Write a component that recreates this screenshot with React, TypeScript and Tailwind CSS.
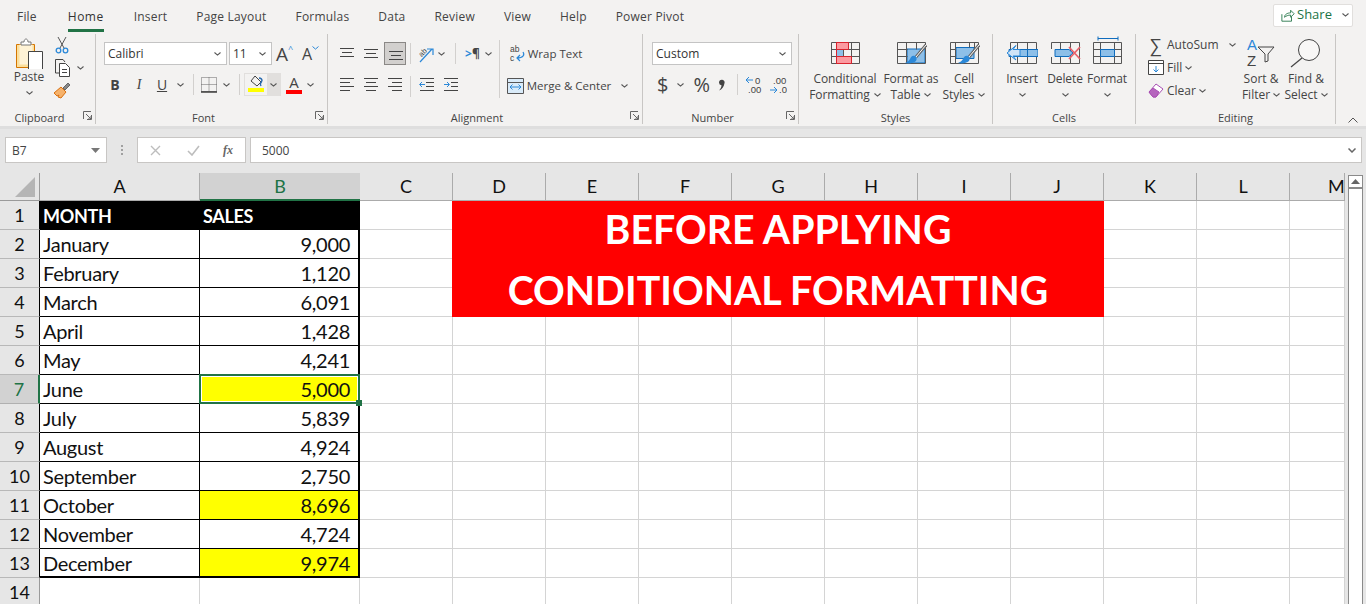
import type { ReactNode } from "react";

const tabs = ["File", "Home", "Insert", "Page Layout", "Formulas", "Data", "Review", "View", "Help", "Power Pivot"];
const columns = ["A", "B", "C", "D", "E", "F", "G", "H", "I", "J", "K", "L", "M"];
const sales: [string, string, boolean][] = [
  ["January", "9,000", false],
  ["February", "1,120", false],
  ["March", "6,091", false],
  ["April", "1,428", false],
  ["May", "4,241", false],
  ["June", "5,000", true],
  ["July", "5,839", false],
  ["August", "4,924", false],
  ["September", "2,750", false],
  ["October", "8,696", true],
  ["November", "4,724", false],
  ["December", "9,974", true],
];

function Chevron({ className = "" }: { className?: string }) {
  return (
    <svg width="7" height="4" viewBox="0 0 7 4" className={"shrink-0 " + className}>
      <path d="M.5.5l3 2.6 3-2.6" fill="none" stroke="#555" strokeWidth="1.1" />
    </svg>
  );
}

function Lines({ d }: { d: string }) {
  return (
    <svg width="15" height="15" viewBox="0 0 15 15" className="shrink-0">
      <path d={d} stroke="#444" strokeWidth="1" fill="none" />
    </svg>
  );
}

function Launcher() {
  return (
    <svg width="9" height="9" viewBox="0 0 9 9" className="absolute right-[3px] bottom-[4px]">
      <path d="M.5 8V.5H8M8.5 4v4.5H4M3 3l5 5M5 8h3V5" fill="none" stroke="#666" strokeWidth="1" />
    </svg>
  );
}

function Group({ className, label, launcher, children }: { className: string; label: string; launcher?: boolean; children: ReactNode }) {
  return (
    <div className={"relative h-[90px] shrink-0 border-r border-[#c8c6c4] flex flex-col " + className}>
      <div className="h-[76px]">{children}</div>
      <div className={"h-[14px] pt-[1px] leading-[14px] text-[11px] text-center text-[#444] " + (launcher ? "pr-[16px]" : "")}>{label}</div>
      {launcher && <Launcher />}
    </div>
  );
}

function GridIcon({ children }: { children?: ReactNode }) {
  return (
    <svg width="32" height="28" viewBox="0 0 32 28" className="shrink-0">
      {children}
    </svg>
  );
}

function ConditionalIcon() {
  return (
    <GridIcon>
      <path d="M7.5 6.5h12v7h-12zM7.5 20.5h15v7h-15z" fill="#fb9aa0" />
      <path d="M7.5 13.5h7v7h-7z" fill="#8dbfe8" />
      <path d="M2.5 6.5h28v21h-28zM2.5 13.5h28M2.5 20.5h28M14.5 13.5v7M22.5 6.5v21" fill="none" stroke="#555" />
      <path d="M7.5 6.5h12v7h-12zM7.5 20.5h15v7h-15zM7.5 6.5v21" fill="none" stroke="#d9232e" />
    </GridIcon>
  );
}

function Brush() {
  return (
    <>
      <path d="M31 9L21 21" stroke="#666" strokeWidth="3" />
      <path d="M31 9L21 21" stroke="#fff" strokeWidth="1" />
      <path d="M10 27c4 1 9 0 11-2 1-2 1-4-1-5-3-1-4 1-5 3-1 2-3 3-5 4z" fill="#2b88d8" />
    </>
  );
}

function TableIcon() {
  return (
    <GridIcon>
      <path d="M12 13h18v14H12z" fill="#8dbfe8" />
      <path d="M12 13h18v14H12z" fill="none" stroke="#0f6cbd" />
      <path d="M2.5 6.5h28v21h-28zM2.5 13.5h10M2.5 20.5h10M11.5 6.5v21M21.5 6.5v7" fill="none" stroke="#555" />
      <Brush />
    </GridIcon>
  );
}

function StylesIcon() {
  return (
    <GridIcon>
      <path d="M8 11.5h18v11H8z" fill="#8dbfe8" stroke="#0f6cbd" />
      <path d="M2.5 6.5h28v21h-28zM2.5 13.5h5M2.5 20.5h5M7.5 6.5v21M26.5 6.5v6M21.5 6.5v5" fill="none" stroke="#555" />
      <Brush />
    </GridIcon>
  );
}

function InsertIcon() {
  return (
    <GridIcon>
      <path d="M4.5 6.5h26v21h-26zM11.5 6.5v21M21.5 6.5v21" fill="none" stroke="#555" />
      <path d="M3 13.5h29v7H3z" fill="#8dbfe8" stroke="#0f6cbd" />
      <path d="M11.5 13.5v7M21.5 13.5v7" stroke="#0f6cbd" />
      <path d="M14 13.5H7l3-4-9 7.5 9 7-3-4h7z" fill="#cfe4f7" stroke="#2b88d8" />
    </GridIcon>
  );
}

function DeleteIcon() {
  return (
    <GridIcon>
      <path d="M2.5 6.5h28v21h-28zM11.5 6.5v21M21.5 6.5v21" fill="none" stroke="#555" />
      <path d="M0 13h14v8H0z" fill="#f3f2f1" />
      <path d="M6 13.5h14l4 3.5-4 3.5H6z" fill="#8dbfe8" stroke="#0f6cbd" />
      <path d="M20 11l11 12M31 11L20 23" stroke="#e8606a" strokeWidth="1.7" />
    </GridIcon>
  );
}

function FormatIcon() {
  return (
    <GridIcon>
      <path d="M7 2.5h20M7 .5v4M27 .5v4" stroke="#0f6cbd" />
      <path d="M2.5 6.5h28v21h-28zM2.5 13.5h28M2.5 20.5h28M9.5 6.5v21M23.5 6.5v21" fill="none" stroke="#555" />
      <path d="M9.5 13.5h14v7h-14z" fill="#8dbfe8" stroke="#0f6cbd" />
    </GridIcon>
  );
}

function LargeButton({ className, icon, lines, chevron }: { className: string; icon: ReactNode; lines: string[]; chevron?: boolean }) {
  return (
    <div className={"flex flex-col items-center shrink-0 " + className}>
      <div className="h-[35px] flex items-end justify-center pb-[7px]">{icon}</div>
      {lines.map((line, i) => (
        <div key={line} className="h-[16px] leading-[16px] flex items-center gap-[4px] whitespace-nowrap text-[12px] tracking-[-.1px] text-[#444]">
          {line}
          {chevron && i === lines.length - 1 && lines.length > 1 && <Chevron />}
        </div>
      ))}
      {lines.length === 1 && (
        <div className="h-[16px] flex items-center">
          <Chevron />
        </div>
      )}
    </div>
  );
}

function Combo({ className, text }: { className: string; text: string }) {
  return (
    <div className={"h-[23px] bg-white border border-[#c4c4c4] flex items-center justify-between pl-[3px] pr-[5px] text-[12px] text-[#333] shrink-0 " + className}>
      <span>{text}</span>
      <Chevron />
    </div>
  );
}

function Divider({ className = "" }: { className?: string }) {
  return <div className={"w-px h-[21px] bg-[#d2d0ce] shrink-0 " + className} />;
}

function Ribbon() {
  return (
    <div className="h-[94px] bg-[#f3f2f1] flex items-start pt-[2px]">
      {/* Clipboard */}
      <Group className="w-[96px]" label="Clipboard" launcher>
        <div className="flex">
          <div className="ml-[12px] w-[34px] flex flex-col items-center">
            <div className="h-[35px] flex items-end">
              <svg width="30" height="32" viewBox="0 0 30 32">
                <path d="M2.5 7.5h18v23h-18z" fill="#fbdf9c" stroke="#d47500" />
                <path d="M5.5 7.5h13v20h-13z" fill="#fff3d6" />
                <path d="M7 8V5h3c0-4 4-4 4 0h3v3z" fill="#fff" stroke="#777" />
                <path d="M14.500 14.500h14v18h-14z" fill="#fff" stroke="#444" />
              </svg>
            </div>
            <div className="h-[16px] leading-[16px] text-[12px] text-[#444]">Paste</div>
            <div className="h-[16px] flex items-center"><Chevron /></div>
          </div>
          <div className="ml-[8px] flex flex-col pt-[2px] gap-[5px]">
            <svg width="14" height="18" viewBox="0 0 14 18" className="ml-[1px]">
              <path d="M3 1l6 11M11 1L5 12" stroke="#555" fill="none" />
              <circle cx="3.500" cy="14.500" r="2.300" fill="none" stroke="#2b88d8" strokeWidth="1.300" />
              <circle cx="10.500" cy="14.500" r="2.300" fill="none" stroke="#2b88d8" strokeWidth="1.300" />
            </svg>
            <div className="flex items-center gap-[6px]">
              <svg width="17" height="18" viewBox="0 0 17 18">
                <path d="M5 14H1.500V.5H9L11 3" fill="none" stroke="#444" />
                <path d="M5.500 4.500h6l4 4v9h-10z" fill="#fff" stroke="#444" />
                <path d="M8 10.500h5M8 13.500h5" stroke="#444" />
              </svg>
              <Chevron />
            </div>
            <svg width="18" height="17" viewBox="0 0 18 17" className="-ml-[1px]">
              <path d="M10 6l5-5 2 2-5 5z" fill="#888" stroke="#666" />
              <path d="M1 11l7-6 5 5-5 6-3-1 1-2-2 1z" fill="#f6b26b" stroke="#d9700f" />
            </svg>
          </div>
        </div>
      </Group>

      {/* Font */}
      <Group className="w-[232px]" label="Font" launcher>
        <div className="flex flex-col pt-[8px] pl-[8px]">
          <div className="flex items-center">
            <Combo className="w-[123px]" text="Calibri" />
            <Combo className="w-[43px] ml-[2px]" text="11" />
            <div className="ml-[4px] w-[26px] flex items-start text-[19px] leading-[22px] text-[#444]">
              A<span className="text-[9px] leading-[12px] text-[#2b88d8]">^</span>
            </div>
            <div className="flex items-start text-[16px] leading-[22px] text-[#444]">
              A
              <svg width="7" height="4" viewBox="0 0 7 4" className="mt-[3px]">
                <path d="M.5.5l3 2.600 3-2.600" fill="none" stroke="#2b88d8" />
              </svg>
            </div>
          </div>
          <div className="flex items-center mt-[8px] h-[23px] text-[#444]">
            <div className="ml-[1px] w-[20px] text-center font-bold text-[14px]">B</div>
            <div className="ml-[4px] w-[20px] text-center italic text-[14px] font-['Liberation_Serif',serif]">I</div>
            <div className="ml-[3px] w-[20px] text-center underline text-[14px]">U</div>
            <Chevron className="ml-[5px]" />
            <Divider className="ml-[9px]" />
            <svg width="16" height="16" viewBox="0 0 16 16" className="ml-[7px]">
              <path d="M.5.500h15v14H.5zM8 .5v14M.5 7.500h15" fill="none" stroke="#666" strokeDasharray="1 1" />
              <path d="M0 15h16" stroke="#222" strokeWidth="1.300" />
            </svg>
            <Chevron className="ml-[6px]" />
            <Divider className="ml-[9px]" />
            <div className="ml-[4px] w-[37px] h-[23px] flex border border-[#e1dfdd]">
              <div className="w-[22px] flex flex-col items-center pt-[1px]">
                <svg width="16" height="13" viewBox="0 0 16 13">
                  <path d="M7 1l6 6-4 4-6-5z" fill="none" stroke="#444" />
                  <path d="M13 11c-1-2 0-4 1-5M11 3c2 0 3 1 3 3" fill="none" stroke="#2b6cb0" strokeWidth="1.400" />
                </svg>
                <div className="w-[16px] h-[4px] bg-[#ffff00]" />
              </div>
              <div className="flex-1 bg-[#e1dfdd] flex items-center justify-center"><Chevron /></div>
            </div>
            <div className="ml-[5px] w-[16px] flex flex-col items-center">
              <div className="text-[15px] leading-[15px]">A</div>
              <div className="w-[16px] h-[4px] bg-[#ff0000]" />
            </div>
            <Chevron className="ml-[5px]" />
          </div>
        </div>
      </Group>

      {/* Alignment */}
      <Group className="w-[315px]" label="Alignment" launcher>
        <div className="flex pl-[12px] pt-[8px]">
          <div className="flex flex-col">
            <div className="flex items-center h-[23px]">
              <Lines d="M0 2.500h14M2 6.500h10M0 10.500h14" />
              <div className="w-[9px]" />
              <Lines d="M0 3.500h14M2 7.500h10M0 11.500h14" />
              <div className="ml-[5px] w-[22px] h-[23px] bg-[#d2d0ce] border border-[#8a8886] flex items-center justify-center">
                <Lines d="M1 5.500h14M3 9.500h10M1 13.500h14" />
              </div>
              <Divider className="ml-[4px]" />
              <svg width="22" height="22" viewBox="-3 -3 22 22" className="ml-[4px] -mr-[3px]">
                <text x="1" y="9" fontSize="7.500" fill="#444" fontFamily="Liberation Sans" transform="rotate(-45 5 7)">ab</text>
                <path d="M2 16L14 3M9 3h6v6" fill="none" stroke="#2b88d8" strokeWidth="1.200" />
              </svg>
              <Chevron className="ml-[4px]" />
              <Divider className="ml-[10px]" />
              <div className="ml-[9px] flex items-center text-[12px] font-bold leading-none">
                <span className="text-[#2b88d8]">&gt;</span><span className="text-[#444]">¶</span>
              </div>
              <Chevron className="ml-[5px]" />
            </div>
            <div className="flex items-start h-[23px] mt-[9px] pt-[2px]">
              <Lines d="M0 2.500h14M0 6.500h10M0 10.500h14M0 14.500h10" />
              <div className="w-[9px]" />
              <Lines d="M0 2.500h14M2 6.500h10M0 10.500h14M2 14.500h10" />
              <div className="w-[9px]" />
              <Lines d="M0 2.500h14M4 6.500h10M0 10.500h14M4 14.500h10" />
              <Divider className="ml-[7px]" />
              <svg width="15" height="15" viewBox="0 0 15 15" className="ml-[8px]">
                <path d="M1 2.500h14M7 6.500h8M7 10.500h8M1 14.500h14" stroke="#444" />
                <path d="M6 8.500H1M3 6l-2.500 2.500L3 11" fill="none" stroke="#2b88d8" />
              </svg>
              <svg width="15" height="15" viewBox="0 0 15 15" className="ml-[9px]">
                <path d="M1 2.500h14M8 6.500h7M8 10.500h7M1 14.500h14" stroke="#444" />
                <path d="M1 8.500h5M4 6l2.500 2.500L4 11" fill="none" stroke="#2b88d8" />
              </svg>
            </div>
          </div>
          <div className="w-px h-[58px] bg-[#d2d0ce] ml-[7px] -mt-[2px] shrink-0" />
          <div className="flex flex-col ml-[7px] text-[11.5px] text-[#444]">
            <div className="flex items-center h-[23px]">
              <svg width="17" height="21" viewBox="0 0 17 21" className="ml-[2px]">
                <text x="1" y="9" fontSize="8.500" fill="#444" fontFamily="Liberation Sans">ab</text>
                <text x="1" y="18" fontSize="8.500" fill="#444" fontFamily="Liberation Sans">c</text>
                <path d="M14 9c2 3 0 6-6 6M11 12l-3 3 3 3" fill="none" stroke="#2b88d8" strokeWidth="1.200" />
              </svg>
              <span className="ml-[2px]">Wrap Text</span>
            </div>
            <div className="flex items-center h-[23px] mt-[9px]">
              <svg width="17" height="16" viewBox="0 0 17 16">
                <path d="M.5.5h16v15H.5z" fill="#d9ebf9" stroke="#555" />
                <path d="M.5 4.500h16" stroke="#555" />
                <path d="M3 9h11M5.500 6.500L3 9l2.500 2.500M11.500 6.500L14 9l-2.500 2.500" fill="none" stroke="#2b88d8" />
              </svg>
              <span className="ml-[3px]">Merge &amp; Center</span>
              <Chevron className="ml-[10px]" />
            </div>
          </div>
        </div>
      </Group>

      {/* Number */}
      <Group className="w-[156px]" label="Number" launcher>
        <div className="flex flex-col pl-[9px] pt-[8px]">
          <Combo className="w-[140px]" text="Custom" />
          <div className="flex items-center h-[23px] mt-[8px] text-[#444]">
            <span className="ml-[5px] text-[20px] leading-none">$</span>
            <Chevron className="ml-[9px]" />
            <span className="ml-[9px] text-[20px] leading-none">%</span>
            <svg width="7" height="12" viewBox="0 0 7 12" className="ml-[8px]">
              <path d="M1 3.500a2.800 2.800 0 1 1 5.400 1c-.4 3-2.400 6-5.400 7 1.600-1.600 2.400-3 2.500-5.200A2.800 2.800 0 0 1 1 3.500z" fill="#444" />
            </svg>
            <Divider className="ml-[12px]" />
            <svg width="18" height="22" viewBox="0 0 18 22" className="ml-[7px]">
              <path d="M8 6H1M4 3L1 6l3 3" fill="none" stroke="#2b88d8" />
              <text x="10" y="10" fontSize="9.500" fill="#444" fontFamily="Liberation Sans">0</text>
              <text x="3" y="19" fontSize="9.500" fill="#444" fontFamily="Liberation Sans">.00</text>
            </svg>
            <svg width="18" height="22" viewBox="0 0 18 22" className="ml-[6px]">
              <text x="4" y="10" fontSize="9.500" fill="#444" fontFamily="Liberation Sans">.00</text>
              <path d="M1 16h7M5 13l3 3-3 3" fill="none" stroke="#2b88d8" />
              <text x="10" y="19" fontSize="9.500" fill="#444" fontFamily="Liberation Sans">.0</text>
            </svg>
          </div>
        </div>
      </Group>

      {/* Styles */}
      <Group className="w-[194px]" label="Styles">
        <div className="flex pt-[2px] pl-[15px]">
          <LargeButton className="w-[62px]" icon={<ConditionalIcon />} lines={["Conditional", "Formatting"]} chevron />
          <LargeButton className="w-[54px] ml-[8px]" icon={<TableIcon />} lines={["Format as", "Table"]} chevron />
          <LargeButton className="w-[44px] ml-[4px]" icon={<StylesIcon />} lines={["Cell", "Styles"]} chevron />
        </div>
      </Group>

      {/* Cells */}
      <Group className="w-[143px]" label="Cells">
        <div className="flex pt-[2px] pl-[8px]">
          <LargeButton className="w-[42px]" icon={<InsertIcon />} lines={["Insert"]} />
          <LargeButton className="w-[42px] ml-[1px]" icon={<DeleteIcon />} lines={["Delete"]} />
          <LargeButton className="w-[42px]" icon={<FormatIcon />} lines={["Format"]} />
        </div>
      </Group>

      {/* Editing */}
      <Group className="w-[200px]" label="Editing">
        <div className="flex pl-[12px] text-[12px] text-[#444]">
          <div className="flex flex-col w-[90px]">
            <div className="flex items-center h-[22px]">
              <span className="ml-[2px] w-[17px] text-[18px] leading-none">∑</span>
              <span>AutoSum</span>
              <Chevron className="ml-[10px]" />
            </div>
            <div className="flex items-center h-[23px]">
              <svg width="16" height="16" viewBox="0 0 16 16">
                <path d="M.5.500h15v14H.5z" fill="#fff" stroke="#444" />
                <path d="M.5 3.500h15" stroke="#444" />
                <path d="M8 6v6M5.500 9.500L8 12l2.500-2.500" fill="none" stroke="#2b88d8" />
              </svg>
              <span className="ml-[3px]">Fill</span>
              <Chevron className="ml-[3px]" />
            </div>
            <div className="flex items-center h-[23px]">
              <svg width="16" height="15" viewBox="0 0 16 15">
                <path d="M1 9l7-8 7 5-7 8H5z" fill="#fff" stroke="#a94fb3" />
                <path d="M1 9l4-4 6 4-3 5H5z" fill="#b565bd" stroke="#a94fb3" />
              </svg>
              <span className="ml-[3px]">Clear</span>
              <Chevron className="ml-[3px]" />
            </div>
          </div>
          <div className="w-[46px] pt-[2px] flex flex-col items-center">
            <div className="h-[35px] flex items-end pb-[1px]">
              <svg width="30" height="34" viewBox="0 0 30 34">
                <text x="1" y="14" fontSize="15" fill="#2b88d8" fontFamily="Liberation Sans">A</text>
                <text x="1" y="30" fontSize="15" fill="#444" fontFamily="Liberation Sans">Z</text>
                <path d="M12 11h16l-6 7v7l-3 1v-8z" fill="none" stroke="#444" />
              </svg>
            </div>
            <div className="h-[16px] leading-[16px] whitespace-nowrap">Sort &amp;</div>
            <div className="h-[16px] leading-[16px] flex items-center gap-[3px] whitespace-nowrap">Filter<Chevron /></div>
          </div>
          <div className="w-[44px] pt-[2px] flex flex-col items-center">
            <div className="h-[35px] flex items-end pb-[3px]">
              <svg width="32" height="30" viewBox="0 0 32 30">
                <circle cx="19" cy="12" r="10.500" fill="#fff" fillOpacity=".4" stroke="#444" />
                <path d="M12 20L1 29" stroke="#444" strokeWidth="1.200" />
              </svg>
            </div>
            <div className="h-[16px] leading-[16px] whitespace-nowrap">Find &amp;</div>
            <div className="h-[16px] leading-[16px] flex items-center gap-[3px] whitespace-nowrap">Select<Chevron /></div>
          </div>
        </div>
      </Group>
      <svg width="10" height="6" viewBox="0 0 10 6" className="ml-[12px] mt-[83px]">
        <path d="M.5 5.500l4.500-4.500 4.500 4.500" fill="none" stroke="#555" />
      </svg>
    </div>
  );
}

function FormulaBar() {
  return (
    <div className="h-[47px] bg-[#e6e6e6] border-t-[3px] border-[#dedede] flex items-start pt-[8px] pl-[5px] text-[12px] text-[#444]">
      <div className="w-[102px] h-[26px] bg-white border border-[#c8c6c4] flex items-center justify-between pl-[6px] pr-[6px] pt-[1px]">
        B7
        <svg width="9" height="5" viewBox="0 0 9 5"><path d="M0 0h9L4.500 5z" fill="#777" /></svg>
      </div>
      <div className="w-[30px] flex flex-col items-center justify-center h-[26px] gap-[2px]">
        <div className="w-[2px] h-[2px] bg-[#a0a0a0]" />
        <div className="w-[2px] h-[2px] bg-[#a0a0a0]" />
        <div className="w-[2px] h-[2px] bg-[#a0a0a0]" />
      </div>
      <div className="w-[109px] h-[26px] bg-white border border-[#c8c6c4] flex items-center pl-[12px]">
        <svg width="11" height="11" viewBox="0 0 11 11"><path d="M1 1l9 9M10 1l-9 9" stroke="#bdbdbd" strokeWidth="1.400" /></svg>
        <svg width="13" height="11" viewBox="0 0 13 11" className="ml-[26px]"><path d="M1 6l4 4 7-9" fill="none" stroke="#bdbdbd" strokeWidth="1.600" /></svg>
        <span className="ml-[23px] italic font-bold text-[#666] text-[12px] font-['Liberation_Serif',serif]">fx</span>
      </div>
      <div className="ml-[4px] w-[1112px] h-[26px] bg-white border border-[#c8c6c4] flex items-center justify-between pl-[11px] pr-[5px] pt-[1px]">
        5000
        <svg width="8" height="5" viewBox="0 0 8 5"><path d="M.5.500l3.500 3.500 3.500-3.500" fill="none" stroke="#666" strokeWidth="1.500" /></svg>
      </div>
    </div>
  );
}

function Sheet() {
  const rowHeads = Array.from({ length: 14 }, (_, i) => i + 1);
  return (
    <div className="grid grid-cols-[40px_160px_160px_repeat(10,93px)_55px] grid-rows-[28px_repeat(14,29px)] w-[1345px] shrink-0 bg-white font-['Lato','Liberation_Sans',sans-serif] text-[#111]">
      <div className="bg-[#e6e6e6] border-r border-b border-[#9a9a9a] flex items-end justify-end pr-[4px] pb-[3px]">
        <svg width="20" height="20" viewBox="0 0 20 20"><path d="M20 0v20H0z" fill="#b5b5b5" /></svg>
      </div>
      {columns.map((c) =>
        c === "B" ? (
          <div key={c} className="bg-[#d2d2d2] border-b-2 border-[#217346] flex items-center justify-center text-[18px] text-[#217346]">{c}</div>
        ) : c === "M" ? (
          <div key={c} className="bg-[#e6e6e6] border-r border-b border-[#ababab] flex items-center pl-[38px] overflow-hidden text-[18px]">{c}</div>
        ) : (
          <div key={c} className="bg-[#e6e6e6] border-r border-b border-[#ababab] flex items-center justify-center text-[18px]">{c}</div>
        )
      )}
      {rowHeads.map((n) => (
        <Row key={n} n={n} />
      ))}
    </div>
  );
}

function Row({ n }: { n: number }) {
  const plain = "border-r border-b border-[#d4d4d4]";
  const item = n >= 2 && n <= 13 ? sales[n - 2] : null;
  const isLast = n === 13;
  const bordered = "border-r border-b border-black " + (isLast ? "border-b-2" : "");
  const selected = n === 7;
  return (
    <>
      <div
        className={
          "flex items-center justify-center text-[18px] border-b " +
          (selected ? "bg-[#d2d2d2] text-[#217346] border-r-2 border-r-[#217346] border-b-[#b0b0b0]" : "bg-[#e6e6e6] border-r border-b-[#b8b8b8] " + (n === 14 ? "border-r-[#9a9a9a]" : "border-r-black"))
        }
      >
        {n}
      </div>
      {n === 1 ? (
        <>
          <div className="bg-black text-white font-bold text-[18px] tracking-[-.3px] pl-[3px] pt-[2px] flex items-center">MONTH</div>
          <div className="bg-black text-white font-bold text-[18px] tracking-[-.3px] pl-[3px] pt-[2px] flex items-center">SALES</div>
        </>
      ) : item ? (
        <>
          <div className={"text-[20px] tracking-[-.3px] pl-[3px] flex items-center " + bordered}>{item[0]}</div>
          <div className={"relative text-[20px] tracking-[-.3px] pr-[8px] flex items-center justify-end border-r-2 border-b border-black " + (isLast ? "border-b-2 " : "") + (item[2] ? "bg-[#ffff00]" : "") + (selected ? " z-10" : "")}>
            {item[1]}
            {selected && (
              <div className="absolute -left-px -top-px -right-[2px] -bottom-px border-2 border-[#217346]">
                <div className="absolute inset-0 border border-white" />
                <div className="absolute -right-[4px] -bottom-[4px] w-[6px] h-[6px] bg-[#217346]" />
              </div>
            )}
          </div>
        </>
      ) : (
        <>
          <div className={plain} />
          <div className={plain} />
        </>
      )}
      <div className={plain} />
      {n === 1 && (
        <div className="relative z-10 col-span-7 row-span-4 -ml-px bg-[#ff0000] text-white font-bold text-[39.3px] leading-[61px] flex flex-col items-center justify-center">
          <div>BEFORE APPLYING</div>
          <div>CONDITIONAL FORMATTING</div>
        </div>
      )}
      {n > 4 && [0, 1, 2, 3, 4, 5, 6].map((i) => <div key={i} className={plain} />)}
      <div className={plain} />
      <div className={plain} />
      <div className={plain} />
    </>
  );
}

function ScrollBar() {
  return (
    <div className="ml-[3px] mt-[2px] w-[15px] h-[431px] border border-[#8a8a8a] bg-white flex flex-col shrink-0">
      <div className="h-[13px] border-b-2 border-[#8a8a8a] flex items-center justify-center">
        <svg width="9" height="5" viewBox="0 0 9 5"><path d="M0 5h9L4.500 0z" fill="#666" /></svg>
      </div>
    </div>
  );
}

export default function App() {
  return (
    <div className="w-[1366px] h-[604px] overflow-hidden bg-[#e6e6e6] font-['Open_Sans','Liberation_Sans',sans-serif]">
      <div className="h-[32px] bg-[#f3f2f1] flex items-center justify-between text-[12px] text-[#444]">
        <div className="flex pl-[17px] pt-[1px] gap-[29px] tracking-[.2px]">
          {tabs.map((t) => (
            <div key={t} className={"relative whitespace-nowrap " + (t === "Home" ? "ml-[2px] mr-[1px] font-medium tracking-[.5px] text-[#333]" : "")}>
              {t}
              {t === "Home" && <div className="absolute left-0 right-0 -bottom-[6px] h-[3px] bg-[#217346]" />}
            </div>
          ))}
        </div>
        <div className="mr-[13px] -mt-[2px] w-[80px] h-[23px] bg-white border border-[#e1dfdd] rounded-[2px] flex items-center pl-[7px] text-[13px] text-[#217346] font-medium">
          <svg width="14" height="13" viewBox="0 0 16 14">
            <path d="M1 5.500v8h11v-5M4 9c0-3 3-5 7-5V1l4 4-4 4V6.500c-3 0-5 1-7 2.500z" fill="none" stroke="#217346" />
          </svg>
          <span className="ml-[2px]">Share</span>
          <Chevron className="ml-[10px]" />
        </div>
      </div>
      <Ribbon />
      <FormulaBar />
      <div className="flex">
        <Sheet />
        <ScrollBar />
      </div>
    </div>
  );
}
